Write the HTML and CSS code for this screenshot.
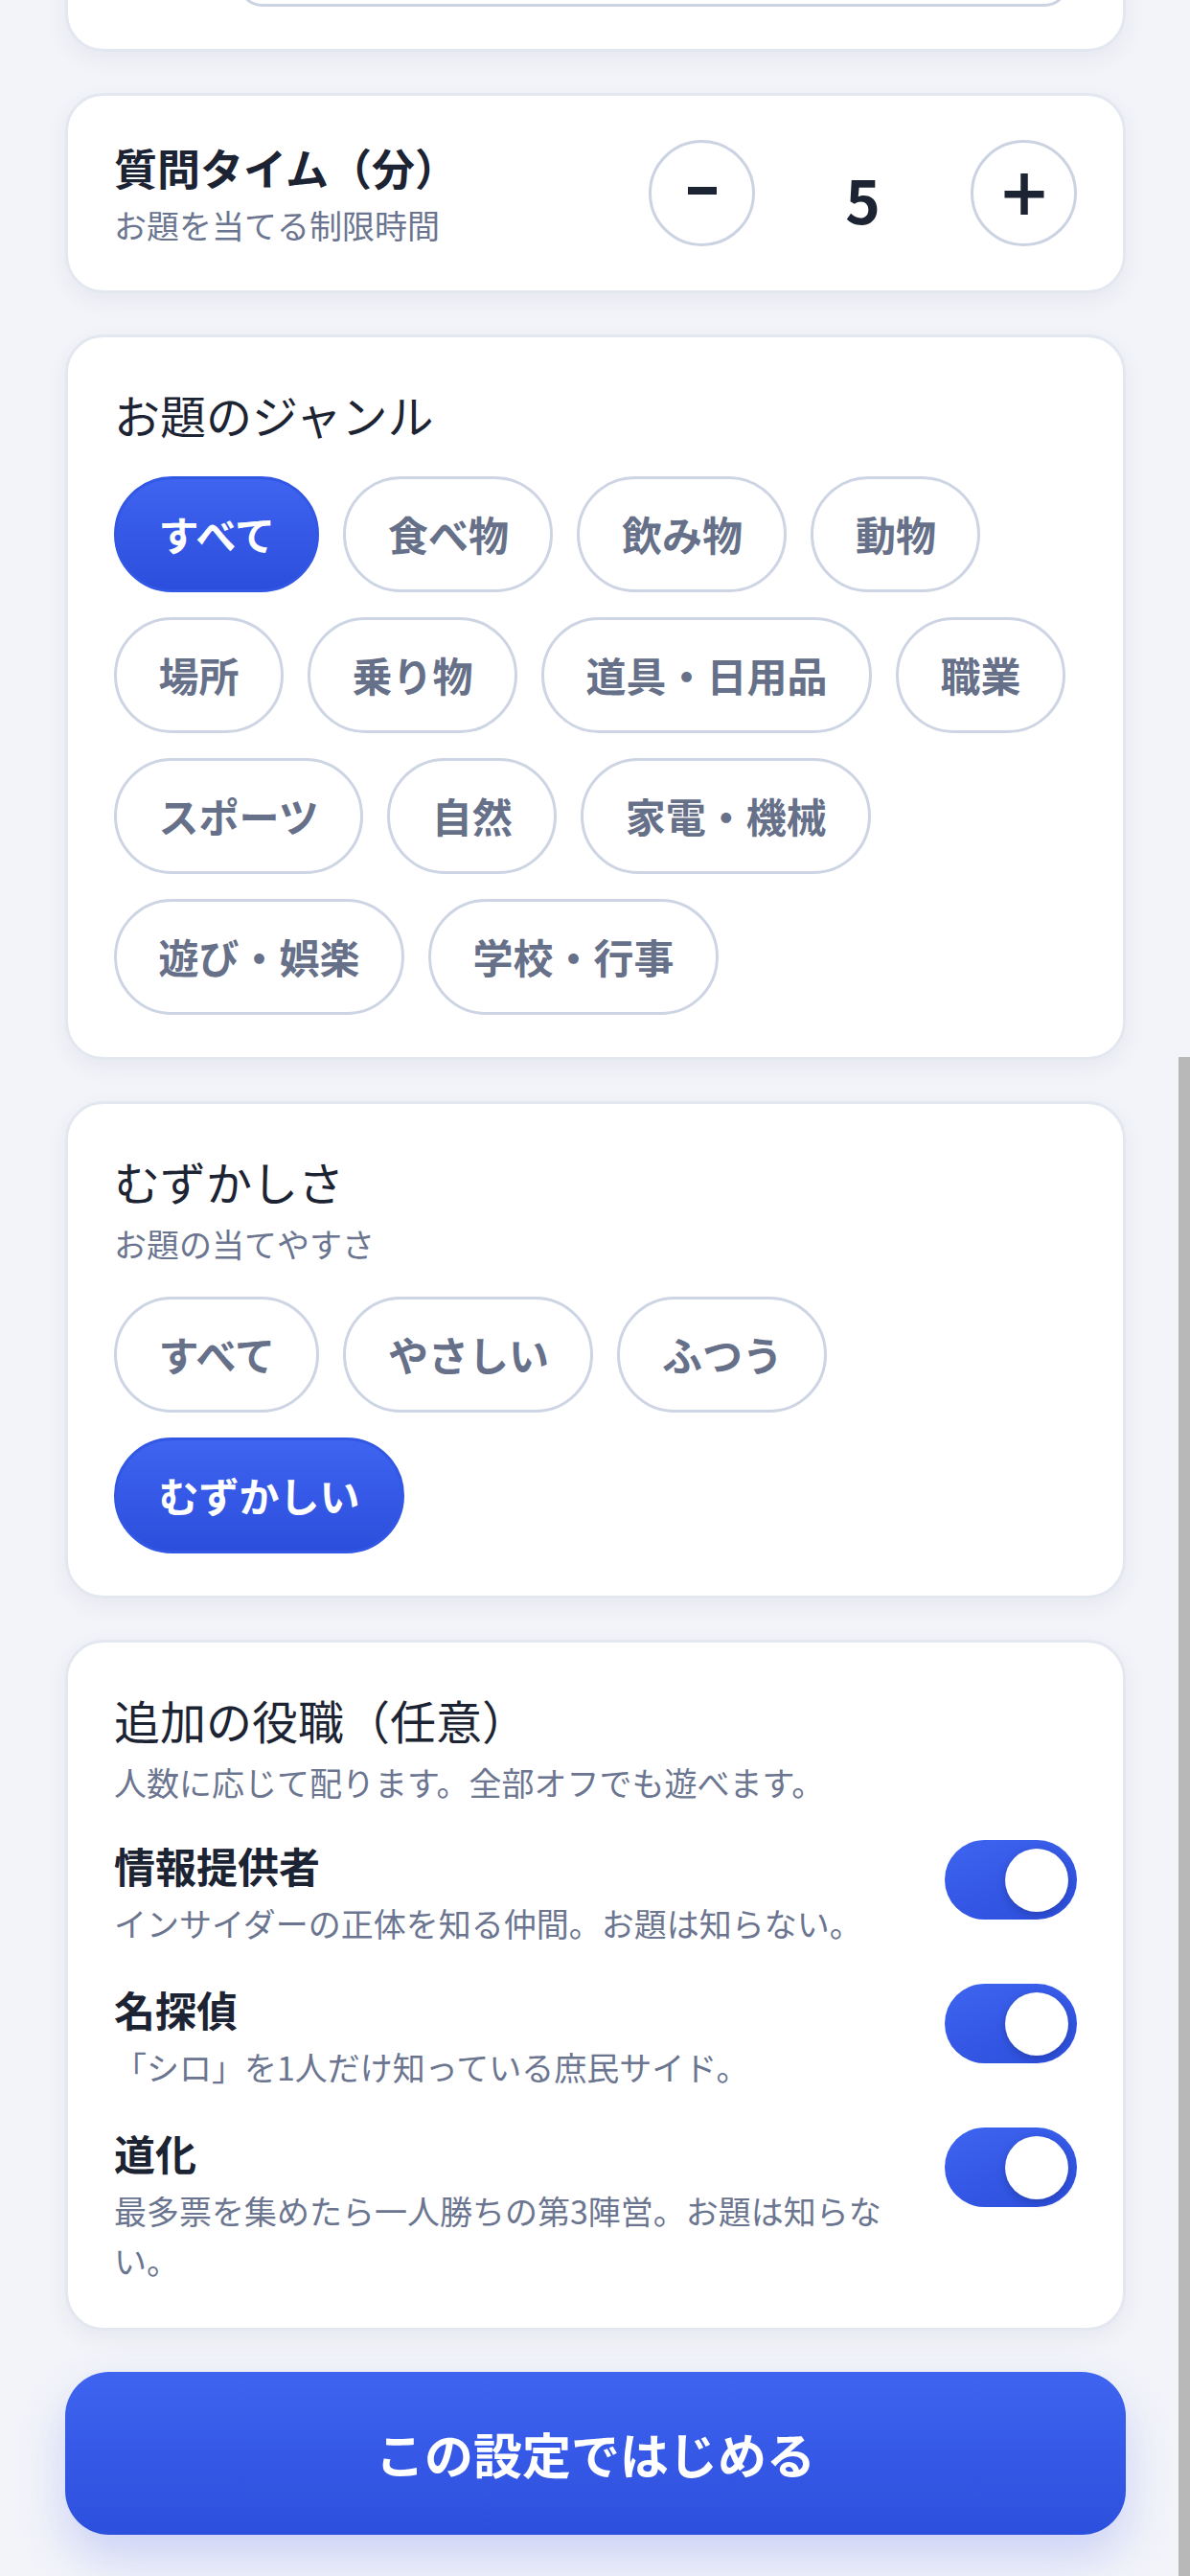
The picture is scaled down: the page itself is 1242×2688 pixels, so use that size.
FILE: index.html
```html
<!DOCTYPE html>
<html lang="ja">
<head>
<meta charset="utf-8">
<title>設定</title>
<link rel="stylesheet" href="styles.css">
</head>
<body>
<div class="scrollbar"></div>
<main class="page">
  <section class="card card-top">
    <div class="field"></div>
  </section>

  <section class="card stepper-card">
    <div class="stepper-text">
      <h2 class="stepper-title">質問タイム（分）</h2>
      <p class="sub">お題を当てる制限時間</p>
    </div>
    <div class="stepper">
      <button class="circle-btn" type="button" aria-label="減らす">
        <svg width="44" height="44" viewBox="0 0 44 44"><rect x="7" y="15" width="30" height="8" fill="#1c2333"/></svg>
      </button>
      <span class="value">5</span>
      <button class="circle-btn" type="button" aria-label="増やす">
        <svg width="44" height="44" viewBox="0 0 44 44"><rect x="1.5" y="19" width="41" height="7.5" fill="#1c2333"/><rect x="18.25" y="1" width="7.5" height="43" fill="#1c2333"/></svg>
      </button>
    </div>
  </section>

  <section class="card">
    <h2 class="section-title">お題のジャンル</h2>
    <div class="chips chips-genre">
      <span class="chip active">すべて</span>
      <span class="chip">食べ物</span>
      <span class="chip">飲み物</span>
      <span class="chip">動物</span>
      <span class="chip">場所</span>
      <span class="chip">乗り物</span>
      <span class="chip">道具・日用品</span>
      <span class="chip">職業</span>
      <span class="chip">スポーツ</span>
      <span class="chip">自然</span>
      <span class="chip">家電・機械</span>
      <span class="chip">遊び・娯楽</span>
      <span class="chip">学校・行事</span>
    </div>
  </section>

  <section class="card">
    <h2 class="section-title">むずかしさ</h2>
    <p class="sub section-sub">お題の当てやすさ</p>
    <div class="chips chips-level">
      <span class="chip">すべて</span>
      <span class="chip">やさしい</span>
      <span class="chip">ふつう</span>
      <span class="chip active">むずかしい</span>
    </div>
  </section>

  <section class="card">
    <h2 class="section-title">追加の役職（任意）</h2>
    <p class="sub section-sub">人数に応じて配ります。全部オフでも遊べます。</p>
    <div class="roles">
      <div class="role">
        <div class="role-text">
          <h3 class="role-name">情報提供者</h3>
          <p class="role-desc">インサイダーの正体を知る仲間。お題は知らない。</p>
        </div>
        <span class="toggle on"></span>
      </div>
      <div class="role">
        <div class="role-text">
          <h3 class="role-name">名探偵</h3>
          <p class="role-desc">「シロ」を1人だけ知っている庶民サイド。</p>
        </div>
        <span class="toggle on"></span>
      </div>
      <div class="role">
        <div class="role-text">
          <h3 class="role-name">道化</h3>
          <p class="role-desc">最多票を集めたら一人勝ちの第3陣営。お題は知らない。</p>
        </div>
        <span class="toggle on"></span>
      </div>
    </div>
  </section>

  <button class="start-btn" type="button">この設定ではじめる</button>
</main>
</body>
</html>
```

FILE: styles.css
```css
* {
  box-sizing: border-box;
  margin: 0;
  padding: 0;
}

html,
body {
  background: #f3f4f9;
}

body {
  font-family: "Noto Sans CJK JP", "Noto Sans", sans-serif;
  color: #1c2333;
  overflow: hidden;
}

button {
  font-family: inherit;
  cursor: pointer;
}

.scrollbar {
  position: fixed;
  top: 1103px;
  right: 0;
  bottom: 0;
  width: 12px;
  background: #b8b8b8;
}

.page {
  display: flex;
  flex-direction: column;
  gap: 43px;
  padding: 0 67px 80px 68px;
  margin-top: -170px;
}

.card {
  background: #fff;
  border: 3px solid #e3e7f0;
  border-radius: 40px;
  padding: 44px 48px 44px 48px;
  box-shadow: 0 8px 24px rgba(30, 45, 100, 0.06);
}

.field {
  height: 130px;
  margin: 0 8px 0 129px;
  border: 3px solid #ccd4e3;
  border-radius: 26px;
}

/* stepper */
.stepper-card {
  display: flex;
  align-items: center;
  justify-content: space-between;
}

.stepper-title {
  font-size: 45px;
  font-weight: 700;
  line-height: 62px;
}

.sub {
  font-size: 34px;
  line-height: 48px;
  color: #6b7590;
  margin-top: 5px;
}

.stepper {
  display: flex;
  align-items: center;
  gap: 36px;
}

.circle-btn {
  width: 111px;
  height: 111px;
  border-radius: 50%;
  border: 3px solid #cbd3e2;
  background: #fff;
  display: flex;
  align-items: center;
  justify-content: center;
}

.value {
  width: 153px;
  text-align: center;
  font-size: 62px;
  font-weight: 700;
  line-height: 80px;
  padding-top: 10px;
  color: #1c2333;
}

/* sections */
.section-title {
  font-size: 48px;
  font-weight: 400;
  line-height: 72px;
  color: #1c2333;
}

.section-sub {
  margin-top: 6px;
}

.chips {
  display: flex;
  flex-wrap: wrap;
  gap: 26px 25px;
}

.chips-genre {
  margin-top: 29px;
}

.chips-level {
  margin-top: 31px;
}

.chip {
  height: 121px;
  padding: 0 43.5px;
  border: 3px solid #cdd4e3;
  border-radius: 61px;
  background: #fff;
  display: inline-flex;
  align-items: center;
  font-size: 42px;
  font-weight: 700;
  line-height: 1.2;
  color: #667089;
  white-space: nowrap;
}

.chip.active {
  background: linear-gradient(180deg, #3e64f0 0%, #2c4edc 100%);
  border-color: #3157e4;
  color: #fff;
}

/* roles */
.roles {
  margin-top: 32px;
  display: flex;
  flex-direction: column;
  gap: 33px;
}

.role {
  display: flex;
  align-items: flex-start;
  gap: 40px;
}

.role-text {
  flex: 1;
  min-width: 0;
}

.role-name {
  font-size: 43px;
  font-weight: 700;
  line-height: 60px;
}

.role-desc {
  font-size: 34px;
  line-height: 52px;
  color: #6b7590;
  margin-top: 5px;
}

.toggle {
  flex: none;
  position: relative;
  width: 138px;
  height: 83px;
  margin-top: 4px;
  border-radius: 42px;
  background: linear-gradient(160deg, #3e64f0 0%, #2c4edc 100%);
}

.toggle::after {
  content: "";
  position: absolute;
  top: 8.5px;
  right: 9px;
  width: 66px;
  height: 66px;
  border-radius: 50%;
  background: #fff;
  box-shadow: 0 3px 8px rgba(10, 20, 60, 0.25);
}

/* start */
.start-btn {
  height: 170px;
  border: none;
  border-radius: 46px;
  background: linear-gradient(180deg, #3e64f0 0%, #2d4fdd 100%);
  color: #fff;
  font-size: 51px;
  font-weight: 700;
  box-shadow: 0 24px 50px rgba(59, 91, 235, 0.22);
}
```
